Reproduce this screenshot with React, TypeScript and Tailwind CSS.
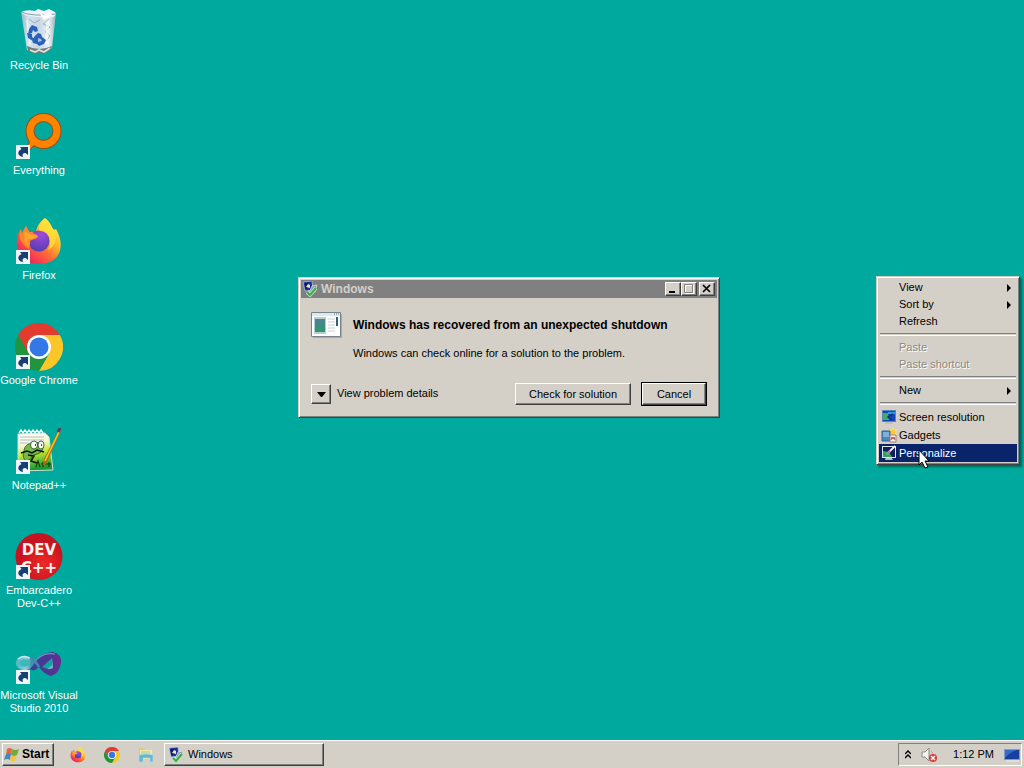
import React from 'react';

type IconProps = { className?: string };

const raised =
  'border border-t-white border-l-white border-r-[#404040] border-b-[#404040] shadow-[inset_-1px_-1px_0_#808080]';

function RecycleBinIcon({ className }: IconProps) {
  return (
    <svg viewBox="0 0 48 48" className={className} aria-hidden="true">
      <defs>
        <linearGradient id="bin" x1="0" x2="1">
          <stop offset="0" stopColor="#8fb4c6" />
          <stop offset=".2" stopColor="#d3e3ee" />
          <stop offset=".5" stopColor="#c6d6e4" />
          <stop offset=".8" stopColor="#e9f1f5" />
          <stop offset="1" stopColor="#94adb9" />
        </linearGradient>
      </defs>
      <path d="M6 4 41 5 37 40Q24 49 12 42Z" fill="url(#bin)" />
      <path d="M6 4Q12 1 20 3L23 1 29 3 34 1 40 4 41 6Q40 10 31 10L14 8Q8 7 6 4Z" fill="#edf2f5" />
      <path d="M6 4q12 5 35 2" fill="none" stroke="#7895a6" strokeWidth=".9" />
      <path d="m23 3 5 4 7-3 2 3-8 5Z" fill="#fff" />
      <path d="m34 11-6 5 7 3-5 5 5 4-5 6M14 11l5 4 6-3" fill="none" stroke="#8798a9" strokeWidth="1" opacity=".7" />
      <path d="m12 12 3 25" stroke="#fff" strokeWidth="1.500" opacity=".7" />
      <path d="m33 13-2 23" stroke="#fff" strokeWidth="3" opacity=".6" />
      <path d="M12 38Q24 44 37 38l-1 4Q24 49 13 43Z" fill="#707b78" />
      <path d="m15 42 5 2 4-2 5 2 6-4" stroke="#dde2df" fill="none" strokeWidth="1.800" />
      <path d="m14 21 3-4 5 2 1 4-3 1-2-2-1 3-4 1ZM12 25l5 1v3l3 2-2 2-5-3ZM19 29l4-4 3 1 1 3 4 3-2 4-5 2-2-2-4-1-1-3 2-1Z" fill="#2b62b9" />
      <path d="m23 30 3 1 1 2-4 1Z" fill="#a6c0df" />
    </svg>
  );
}

function EverythingIcon({ className }: IconProps) {
  return (
    <svg viewBox="0 0 48 48" className={className} aria-hidden="true">
      <path d="m16 25 1 6-6 6" fill="none" stroke="#975013" strokeWidth="6" />
      <circle cx="28.500" cy="18" r="13.500" fill="none" stroke="#975013" strokeWidth="9" />
      <path d="m16 25 1 6-6 6" fill="none" stroke="#ff8200" strokeWidth="4" />
      <circle cx="28.500" cy="18" r="13.500" fill="none" stroke="#ff8200" strokeWidth="7" />
    </svg>
  );
}

function FirefoxIcon({ className }: IconProps) {
  return (
    <svg viewBox="0 0 48 48" className={className} aria-hidden="true">
      <defs>
        <linearGradient id="fox" x1=".9" y1=".1" x2=".2" y2=".9">
          <stop offset="0" stopColor="#fff44f" />
          <stop offset=".35" stopColor="#ffb52b" />
          <stop offset=".62" stopColor="#ff6838" />
          <stop offset="1" stopColor="#ef2261" />
        </linearGradient>
        <radialGradient id="globe" cx=".6" cy=".2" r=".9">
          <stop offset="0" stopColor="#a548dd" />
          <stop offset="1" stopColor="#493eac" />
        </radialGradient>
      </defs>
      <path d="M30 0c7 6 6 9 9 12l2-1c9 15 6 34-16 35C8 46 0 34 2 22c0-5 2-8 4-11l1 4 4-7 3 6 7 0c1-7 5-11 9-14Z" fill="url(#fox)" />
      <circle cx="24" cy="23" r="10.500" fill="url(#globe)" />
      <path d="M6 11 7 16 11 8l4 7c3 0 5 0 8 3 0 3-5 3-8 5 1 3-1 5-1 8-3-2-6-4-7-7-3-3-3-8-1-13Z" fill="#ff872a" />
      <path d="M30 0c-4 4-8 9-5 13 11 0 12 12 8 19 9-4 9-14 6-20-3-3-2-6-9-12Z" fill="#ffe13b" opacity=".75" />
      <path d="M10 13c2 3 8 4 13 5-3 2-8 4-11 3 0 4 1 6 4 8-6-2-8-8-6-16Z" fill="#ffbd36" opacity=".55" />
    </svg>
  );
}

function ChromeIcon({ className }: IconProps) {
  return (
    <svg viewBox="0 0 48 48" className={className} aria-hidden="true">
      <path d="M24 24 3.200 12A24 24 0 0 1 44.800 12Z" fill="#e33b2e" />
      <path d="M24 12H44.800A24 24 0 0 1 24 48L34.400 30Z" fill="#fcc629" />
      <path d="M13.600 30 3.200 12A24 24 0 0 0 24 48L34.400 30Z" fill="#22933f" />
      <path d="M3.200 12 13.600 30 24 24V12Z" fill="#e33b2e" />
      <circle cx="24" cy="24" r="12" fill="#fff" />
      <circle cx="24" cy="24" r="9.500" fill="#3279e7" />
    </svg>
  );
}

function NotepadIcon({ className }: IconProps) {
  return (
    <svg viewBox="0 0 48 48" className={className} aria-hidden="true">
      <defs>
        <linearGradient id="pad" x1="0" y1="0" x2=".2" y2="1">
          <stop offset="0" stopColor="#fff" />
          <stop offset=".35" stopColor="#f4f8d2" />
          <stop offset=".6" stopColor="#c4e82b" />
          <stop offset="1" stopColor="#169b37" />
        </linearGradient>
      </defs>
      <path d="m3 6 27-1 4 4 4 33-35 1Z" fill="url(#pad)" stroke="#d4ddcf" />
      <path d="m4 5 2-3 2 3 2-3 2 3 2-3 2 3 2-3 2 3 2-3 2 3 2-3 2 3" fill="none" stroke="#f5faff" strokeWidth="1.5" />
      <path d="M5 9h24M5 12h24M5 15h24" stroke="#a4afc8" strokeWidth=".8" />
      <path d="M9 24c0-6 4-9 8-8l4-1c7-2 8 4 6 8-4 5-11 2-11 8l-5 2c-2-2-4-5-2-9Z" fill="#74ba40" stroke="#254a20" strokeWidth=".8" />
      <ellipse cx="19" cy="17" rx="3.500" ry="4" fill="#f8fff3" stroke="#243f23" strokeWidth=".8" />
      <ellipse cx="26" cy="17" rx="3" ry="4" fill="#f8fff3" stroke="#243f23" strokeWidth=".8" />
      <path d="M20 17h1M26 17h1M6 25l6-2 5 2 5-3 7 2M13 27l6 1-3 5 6 2" fill="none" stroke="#111" strokeWidth="1.500" />
      <path d="m21 39 2-6 2 6M26 36h5M28 34v5M31 36h5M34 34v5" fill="none" stroke="#143e13" strokeWidth="1.200" />
      <path d="M45 2 31 33l-2 4 1-5Z" stroke="#ab6a10" strokeWidth="2.500" />
      <path d="m44 4-14 29" stroke="#f8c42d" strokeWidth="1.700" />
      <path d="m45 0-2 4" stroke="#593d68" strokeWidth="3" />
    </svg>
  );
}

function DevIcon({ className }: IconProps) {
  return (
    <svg viewBox="0 0 48 48" className={className} aria-hidden="true">
      <defs>
        <radialGradient id="dev" cx=".6" cy=".65">
          <stop offset="0" stopColor="#ef2927" />
          <stop offset="1" stopColor="#c51320" />
        </radialGradient>
      </defs>
      <circle cx="24" cy="23.500" r="23.500" fill="url(#dev)" />
      <g fill="#fff4ee" fontFamily="DejaVu Sans, sans-serif" fontWeight="700" fontSize="15">
        <text x="24" y="22" textAnchor="middle">DEV</text>
        <text x="24" y="40" textAnchor="middle">C++</text>
      </g>
    </svg>
  );
}

function VisualStudioIcon({ className }: IconProps) {
  return (
    <svg viewBox="0 0 48 48" className={className} aria-hidden="true">
      <defs>
        <linearGradient id="ring" x1="0" x2="1">
          <stop offset="0" stopColor="#52b9c4" />
          <stop offset=".6" stopColor="#8fd0da" />
          <stop offset="1" stopColor="#3e93a8" />
        </linearGradient>
        <linearGradient id="loop" x1="0" x2="1">
          <stop offset="0" stopColor="#3d3f93" />
          <stop offset=".6" stopColor="#4a3795" />
          <stop offset="1" stopColor="#6a2d91" />
        </linearGradient>
      </defs>
      <ellipse cx="9.500" cy="25" rx="7" ry="5.500" fill="#3db7b8" stroke="url(#ring)" strokeWidth="3.500" />
      <path d="M3 21q6-5 13 0" fill="none" stroke="#c8eaf0" strokeWidth="1.500" />
      <path d="M15 31Q18 28 22 22 29 14 38 14 47 16 46 25 44 36 36 38 29 36 24 29L20 32Q17 33 15 31Z" fill="url(#loop)" />
      <path d="M27 29 37 20 38 30Q33 32 27 29Z" fill="#0ba69f" />
      <path d="M37 20 38 30Q35 32 32 31L37 27Z" fill="#a4c8e2" opacity=".6" />
      <path d="M17 23q3-1 5-1M22 21q8-7 18-5" fill="none" stroke="#8a85c6" strokeWidth="1.200" />
      <path d="M15 20q5 2 9 9" fill="none" stroke="#4b85b4" strokeWidth="2.500" />
    </svg>
  );
}

function ShortcutArrow() {
  return (
    <svg viewBox="0 0 14 14" className="absolute bottom-0.5 left-px size-3.5" aria-hidden="true">
      <path d="M0 0h14v14H0Z" fill="#eef6f7" />
      <path d="M4 2h8v8L9.500 8C7 8 6 9 7 12 1 11 1 6 5.500 4Z" fill="#173f75" />
    </svg>
  );
}

function SystemIcon({ className }: IconProps) {
  return (
    <svg viewBox="0 0 16 16" className={className} aria-hidden="true">
      <path d="m1 1 9-1 1 9-8 1Z" fill="#1a2f98" stroke="#c3cbe3" strokeWidth=".7" />
      <path d="m3 2 3 0v5l-3 1Z" fill="#111c4e" />
      <path d="m4 6 2-3 2 1v3Z" fill="#e8e7bd" />
      <path d="m10 5 5-1-2 7-6 1Z" fill="#8ba2b4" stroke="#dbe5e5" strokeWidth=".7" />
      <path d="m5 11 3 3 6-7" fill="none" stroke="#bdecb5" strokeWidth="3.500" />
      <path d="m5 11 3 3 6-7" fill="none" stroke="#45a554" strokeWidth="2" />
    </svg>
  );
}

function FlagIcon({ className }: IconProps) {
  return (
    <svg viewBox="0 0 16 16" className={className} aria-hidden="true">
      <path d="M3 2q3-2 5 0L7 7Q5 5 2 7Z" fill="#e8643a" />
      <path d="M8 2q3 2 7 0l-2 6q-3 2-6 0Z" fill="#6fa944" />
      <path d="M2 7q3-2 5 0l-1 6q-3-2-6 0Z" fill="#4488bd" />
      <path d="M7 8q3 2 6 0l-2 6q-3 1-5-1Z" fill="#efc542" />
    </svg>
  );
}

function FolderIcon({ className }: IconProps) {
  return (
    <svg viewBox="0 0 16 16" className={className} aria-hidden="true">
      <path d="M1 1h5l1 2h7v9H1Z" fill="#dccb80" />
      <path d="M2 3h12v9H2Z" fill="#f3e8ab" />
      <path d="M3 4h9v4H3Z" fill="#c5dca4" />
      <path d="M1 8q7-2 14 0v7h-3v-4H5v4H1Z" fill="#68b5cf" stroke="#a9dbe6" strokeWidth=".7" />
    </svg>
  );
}

function ScreenIcon({ className, pen = false }: IconProps & { pen?: boolean }) {
  return (
    <svg viewBox="0 0 16 16" className={className} aria-hidden="true">
      <path d="m5 12-1 3h8l-2-3Z" fill="#b9c0c6" />
      <path d="M1 1h14v12H1Z" fill={pen ? '#dfe5e0' : '#5b84bd'} />
      <path d="M2 2h12v10H2Z" fill={pen ? '#101f5c' : '#1546b8'} />
      {pen ? (
        <>
          <path d="M2 12V6l6 1 3 5Z" fill="#36a061" />
          <path d="m6 9 8-8" stroke="#f6e9e7" strokeWidth="2" />
          <path d="m6 9 3-3" stroke="#c366b5" strokeWidth="2" />
        </>
      ) : (
        <>
          <path d="M2 4h5l1 7H2Z" fill="#3fae62" />
          <path d="M7 5V3h7v2Z" fill="#2e9ae9" />
          <path d="m12 5-5 3 4 3" fill="none" stroke="#0c2f80" strokeWidth="1.500" />
        </>
      )}
    </svg>
  );
}

function GadgetsIcon({ className }: IconProps) {
  return (
    <svg viewBox="0 0 16 16" className={className} aria-hidden="true">
      <path d="m12 0 1 3 3-1-1 3 1 3H9L8 4l2-1Z" fill="#ffe27a" />
      <circle cx="12" cy="5" r="2.500" fill="#ffc93c" />
      <path d="M1 4h8v10H1Z" fill="#4f86bb" stroke="#34618f" />
      <path d="M2 5h6v5H2Z" fill="#7fb1d8" />
      <path d="M9 8h6v7H9Z" fill="#edf0f5" stroke="#b37a6c" />
      <path d="m10 13 1-3 1 2 1-2 1 3" fill="none" stroke="#c0483c" />
    </svg>
  );
}

function ReportIcon({ className }: IconProps) {
  return (
    <svg viewBox="0 0 32 26" className={className} aria-hidden="true">
      <path d="M2 2h29v24H2Z" fill="#aaa9a5" />
      <path d="M.5 .5h29v24H.5Z" fill="#fff" stroke="#79848a" />
      <path d="M1 1h28v3H1Z" fill="#dce9ed" />
      <path d="M23 2h1M25 2h1M27 2h1" stroke="#4d82a1" />
      <path d="M3 5h12v17H3Z" fill="#b4ced4" />
      <path d="M4 7h10v13H4Z" fill="#399078" />
      <path d="M4 7h10v5H4Z" fill="#4b8295" />
      <path d="M17 7h7M17 10h7M17 13h7M17 16h7M17 19h7" stroke="#c9d0d3" />
      <path d="M26 5v9" stroke="#315d7e" strokeWidth="2" />
    </svg>
  );
}

const shortcuts = [
  { label: 'Recycle Bin', Icon: RecycleBinIcon, linked: false },
  { label: 'Everything', Icon: EverythingIcon, linked: true },
  { label: 'Firefox', Icon: FirefoxIcon, linked: true },
  { label: 'Google Chrome', Icon: ChromeIcon, linked: true },
  { label: 'Notepad++', Icon: NotepadIcon, linked: true },
  { label: 'Embarcadero Dev-C++', Icon: DevIcon, linked: true },
  { label: 'Microsoft Visual Studio 2010', Icon: VisualStudioIcon, linked: true },
];

function DesktopIcons() {
  return (
    <nav aria-label="Desktop" className="flex w-[78px] flex-col">
      {shortcuts.map(({ label, Icon, linked }) => (
        <button key={label} type="button" className="flex h-[105px] flex-col items-center gap-[3px] pt-2 text-white">
          <span className="relative size-12 shrink-0">
            <Icon className="size-12" />
            {linked && <ShortcutArrow />}
          </span>
          <span className="leading-[13px]">{label}</span>
        </button>
      ))}
    </nav>
  );
}

function CaptionButton({ label, children }: { label: string; children: React.ReactNode }) {
  return (
    <button type="button" aria-label={label} className={`flex h-3.5 w-4 items-center justify-center bg-[#d4d0c8] ${raised}`}>
      <svg viewBox="0 0 12 10" className="h-2.5 w-3 shrink-0" aria-hidden="true">{children}</svg>
    </button>
  );
}

function RecoveryDialog() {
  return (
    <section
      role="dialog"
      aria-labelledby="recovery-title"
      className="absolute top-[277px] left-[298px] w-[422px] border border-t-[#d4d0c8] border-r-[#404040] border-b-[#404040] border-l-[#d4d0c8] bg-[#d4d0c8] p-0.5 shadow-[inset_1px_1px_0_#fff,inset_-1px_-1px_0_#808080]"
    >
      <header className="flex h-[18px] items-center bg-[#808080] pr-0.5 pl-px">
        <SystemIcon className="size-4" />
        <span id="recovery-title" className="ml-[3px] flex-1 text-[12px] font-bold text-[#d4d0c8]">Windows</span>
        <CaptionButton label="Minimize"><path d="M2 7h6v2H2Z" /></CaptionButton>
        <CaptionButton label="Maximize">
          <path d="M2.500 1.500h8v8h-8Z" fill="none" stroke="#fff" />
          <path d="M1.500 .5h8v8h-8Z" fill="none" stroke="#808080" />
        </CaptionButton>
        <span className="ml-0.5 flex">
          <CaptionButton label="Close"><path d="m2 1 7 7M9 1 2 8" stroke="#000" strokeWidth="1.700" /></CaptionButton>
        </span>
      </header>
      <div className="flex gap-2.5 px-2.5 pt-3.5">
        <ReportIcon className="h-[26px] w-8 shrink-0" />
        <div>
          <h1 className="text-[12px] leading-[26px] font-bold">Windows has recovered from an unexpected shutdown</h1>
          <p className="mt-[7px] leading-4">Windows can check online for a solution to the problem.</p>
        </div>
      </div>
      <footer className="flex items-center gap-2.5 px-2.5 pt-[21px] pb-[9px]">
        <div className="flex flex-1 items-start gap-1.5">
          <button id="details-toggle" type="button" className={`flex size-5 items-center justify-center ${raised}`}>
            <svg viewBox="0 0 9 5" className="h-[5px] w-[9px]" aria-hidden="true"><path d="M0 0h9L5 5H4Z" /></svg>
          </button>
          <label htmlFor="details-toggle" className="leading-[18px]">View problem details</label>
        </div>
        <button type="button" className={`h-[22px] w-[116px] ${raised}`}>Check for solution</button>
        <span className="flex border border-black">
          <button type="button" className={`h-[22px] w-16 ${raised}`}>Cancel</button>
        </span>
      </footer>
    </section>
  );
}

function MenuItem({ label, arrow, disabled, icon, active }: { label: string; arrow?: boolean; disabled?: boolean; icon?: React.ReactNode; active?: boolean }) {
  return (
    <li>
      <button
        type="button"
        disabled={disabled}
        className={`flex w-full items-center pr-1.5 pl-0.5 text-left ${icon ? 'h-[18px]' : 'h-[17px]'} ${active ? 'bg-[#0a246a] text-white' : ''} ${disabled ? 'text-[#8b8984] [text-shadow:1px_1px_0_#fff]' : ''}`}
      >
        <span className="flex w-[18px] shrink-0">{icon}</span>
        <span className="flex-1">{label}</span>
        {arrow && <svg viewBox="0 0 4 8" className="h-2 w-1" aria-hidden="true"><path d="M0 0v8l4-4Z" /></svg>}
      </button>
    </li>
  );
}

function Separator() {
  return (
    <li className="px-px py-[3px]" role="separator">
      <div className="h-[3px] border-t border-b border-t-[#808080] border-b-white" />
    </li>
  );
}

function ContextMenu() {
  return (
    <ul className="absolute top-[276px] right-1 w-36 border border-t-[#d4d0c8] border-r-[#404040] border-b-[#404040] border-l-[#d4d0c8] bg-[#d4d0c8] p-0.5 shadow-[inset_1px_1px_0_#fff,inset_-1px_-1px_0_#808080,2px_2px_2px_#00000066]">
      <MenuItem label="View" arrow />
      <MenuItem label="Sort by" arrow />
      <MenuItem label="Refresh" />
      <Separator />
      <MenuItem label="Paste" disabled />
      <MenuItem label="Paste shortcut" disabled />
      <Separator />
      <MenuItem label="New" arrow />
      <Separator />
      <MenuItem label="Screen resolution" icon={<ScreenIcon className="size-4" />} />
      <MenuItem label="Gadgets" icon={<GadgetsIcon className="size-4" />} />
      <MenuItem label="Personalize" active icon={<ScreenIcon className="size-4" pen />} />
    </ul>
  );
}

function Taskbar() {
  return (
    <footer className="flex h-7 items-center border-t border-white bg-[#d4d0c8] px-0.5">
      <button type="button" className={`flex h-[23px] w-[52px] items-center gap-0.5 px-px text-[12px] font-bold ${raised}`}>
        <FlagIcon className="size-4" />
        Start
      </button>
      <div className="ml-4 flex w-[94px] items-center gap-[18px]">
        <button type="button" aria-label="Firefox"><FirefoxIcon className="size-4" /></button>
        <button type="button" aria-label="Google Chrome"><ChromeIcon className="size-4" /></button>
        <button type="button" aria-label="Windows Explorer"><FolderIcon className="size-4" /></button>
      </div>
      <button type="button" className={`flex h-[23px] w-40 items-center gap-1 px-[3px] ${raised}`}>
        <SystemIcon className="size-4" />
        Windows
      </button>
      <div className="ml-auto flex h-[23px] items-center border border-t-[#808080] border-r-white border-b-white border-l-[#808080] pr-px pl-1.5">
        <button type="button" aria-label="Show hidden icons">
          <svg viewBox="0 0 6 9" className="h-[9px] w-1.5" aria-hidden="true"><path d="m0 4 3-3 3 3M0 8l3-3 3 3" fill="none" stroke="#000" strokeWidth="1.400" /></svg>
        </button>
        <button type="button" aria-label="Volume" className="ml-2.5">
          <svg viewBox="0 0 16 16" className="size-4" aria-hidden="true">
            <path d="M1 5h3l4-4v13l-4-4H1Z" fill="#f2f2ee" stroke="#8c8c87" />
            <path d="M10 4q3 2 2 5" fill="none" stroke="#aaa" />
            <circle cx="12" cy="11" r="4" fill="#d83b36" />
            <path d="m10 9 4 4M14 9l-4 4" stroke="#fff" strokeWidth="1.400" />
          </svg>
        </button>
        <time className="ml-4">1:12 PM</time>
        <button type="button" aria-label="Show desktop" className="ml-2.5">
          <svg viewBox="0 0 16 16" className="size-4" aria-hidden="true">
            <path d="M0 2h16v11H0Z" fill="#7c9cca" />
            <path d="M1 3h14v9H1Z" fill="#1740a2" />
            <path d="M1 3h12q-7 2-12 8Z" fill="#376cc6" />
            <path d="M2 14h13" stroke="#eee" />
          </svg>
        </button>
      </div>
    </footer>
  );
}

export default function App() {
  return (
    <div className="flex min-h-screen flex-col bg-[#d4d0c8] font-['Liberation_Sans',Arial,sans-serif] text-[11px] leading-[13px] text-black">
      <main className="relative flex-1 bg-[#00a99d]">
        <DesktopIcons />
        <RecoveryDialog />
        <ContextMenu />
        <svg viewBox="0 0 12 20" className="pointer-events-none absolute top-[449px] left-[918px] h-5 w-3" aria-hidden="true">
          <path d="M1 1v15l3-3 3 6 3-1-3-6h4Z" fill="#fff" stroke="#000" />
        </svg>
      </main>
      <Taskbar />
    </div>
  );
}
